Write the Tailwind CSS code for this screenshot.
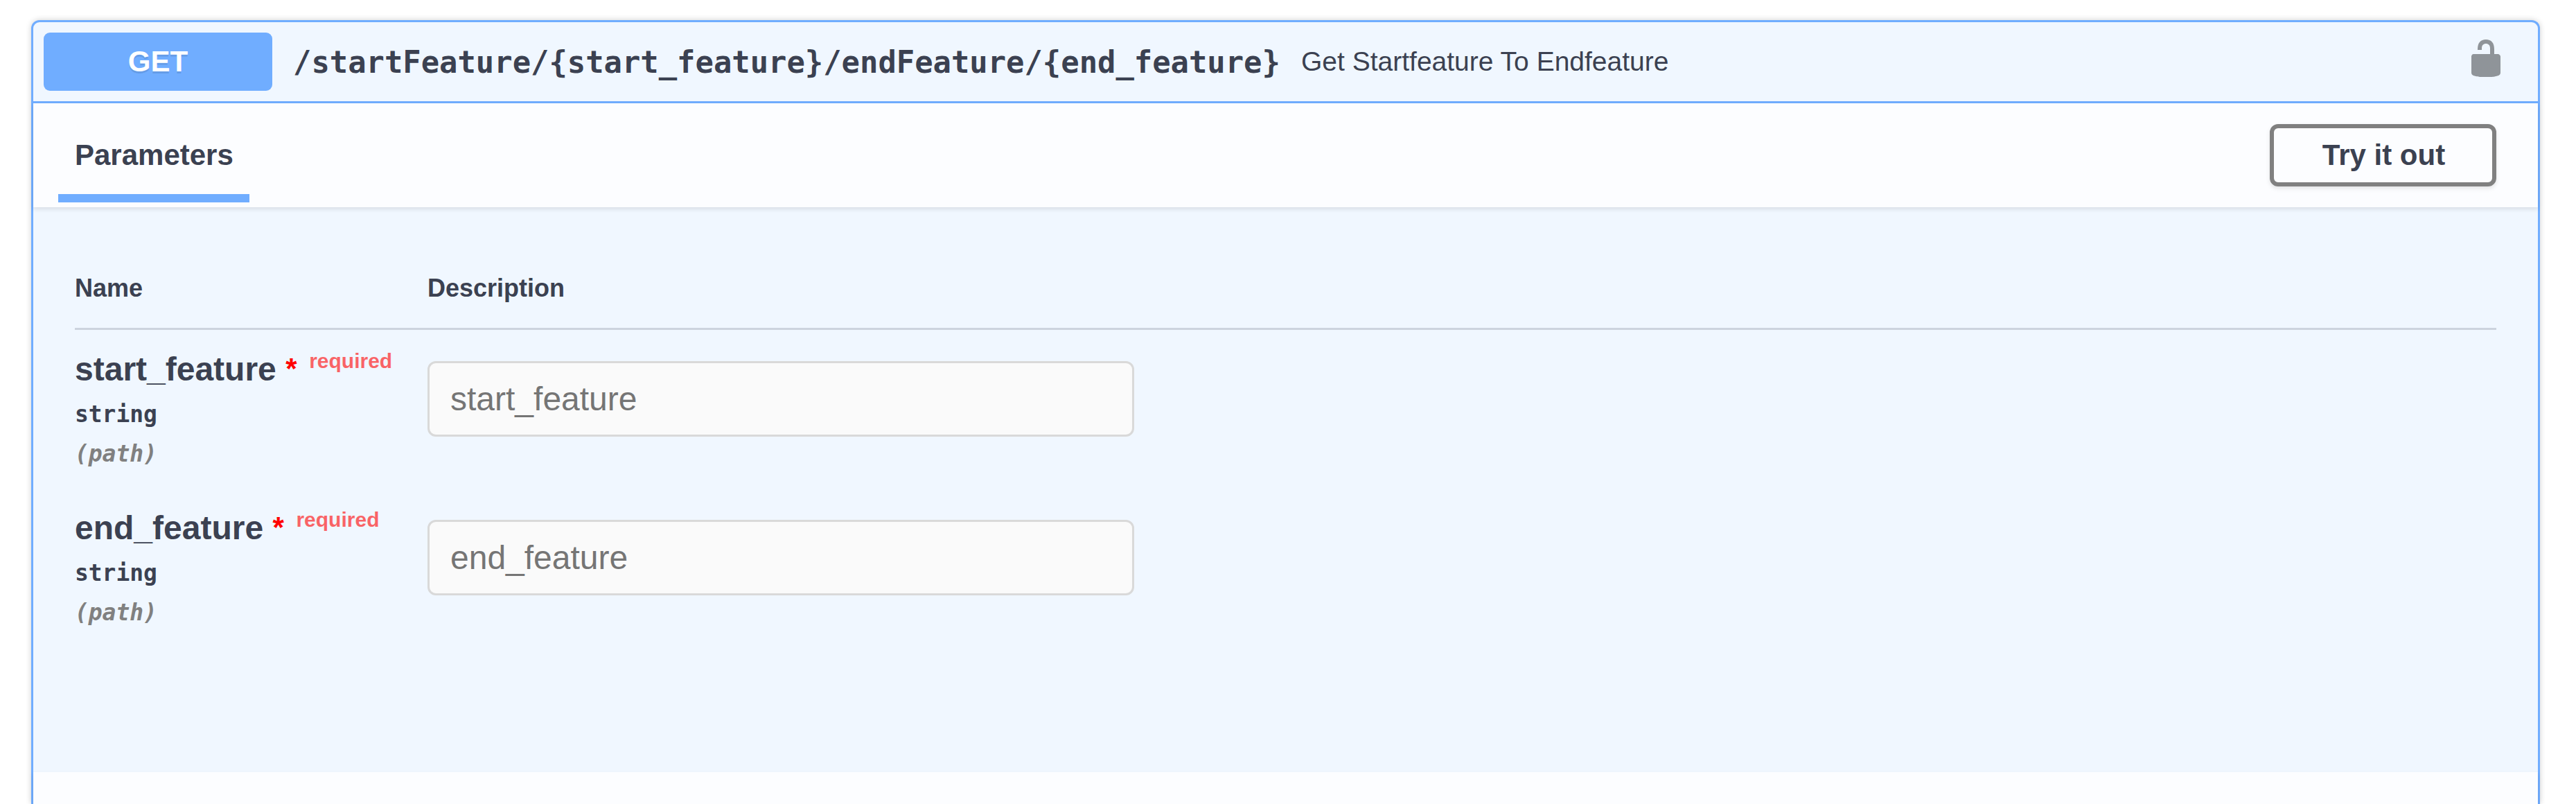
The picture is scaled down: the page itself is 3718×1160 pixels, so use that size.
<!DOCTYPE html>
<html lang="en">
<head>
<meta charset="utf-8">
<title>API operation</title>
<script src="https://cdn.jsdelivr.net/npm/@tailwindcss/browser@4"></script>
</head>
<body class="h-[1160px] overflow-hidden bg-white pt-[29px] pl-[45px] font-['Liberation_Sans',Arial,sans-serif] text-[#3b4151]">
<section class="h-[1131px] w-[3621px] rounded-t-[12px] border-[3px] border-b-0 border-[#70adff] bg-[#f0f7ff] shadow-[0_0_9px_rgba(0,0,0,0.19)]">
  <header class="flex h-[117px] items-center border-b-[3px] border-[#70adff] pl-[15px] pr-[45px]">
    <span class="flex h-[84px] w-[330px] items-center justify-center rounded-[9px] bg-[#70adff] pb-[2px] text-[42px] font-bold text-white [text-shadow:0_3px_0_rgba(0,0,0,0.1)]">GET</span>
    <span class="ml-[30px] w-[1425px] whitespace-nowrap pt-[1px] font-['DejaVu_Sans_Mono',monospace] text-[43.83px] font-bold">/startFeature/{start_feature}/endFeature/{end_feature}</span>
    <span class="ml-[30px] whitespace-nowrap text-[39px]">Get Startfeature To Endfeature</span>
    <svg class="mb-[10px] ml-auto size-[60px] text-[#8f9499]" viewBox="0 0 20 20" fill="currentColor" aria-hidden="true">
      <path d="M15.8 8H14V5.6C14 2.703 12.665 1 10 1 7.334 1 6 2.703 6 5.6V6h2v-.801C8 3.754 8.797 3 10 3c1.203 0 2 .754 2 2.199V8H4c-.553 0-1 .646-1 1.199V17c0 .549.428 1.139.951 1.307l1.197.387C5.672 18.861 6.55 19 7.1 19h5.8c.549 0 1.428-.139 1.951-.307l1.196-.387c.524-.167.953-.757.953-1.306V9.199C17 8.646 16.352 8 15.8 8z"/>
    </svg>
  </header>

  <div class="flex h-[150px] items-center justify-between bg-[#fcfdff] px-[60px] shadow-[0_3px_6px_rgba(0,0,0,0.1)]">
    <h4 class="relative flex h-full items-center pb-[2px] text-[42px] font-bold">Parameters
      <span class="absolute bottom-[7px] -left-[24px] h-[12px] w-[276px] bg-[#70adff]"></span>
    </h4>
    <button class="h-[90px] w-[327px] rounded-[12px] border-[6px] border-[#808080] pb-[2px] pl-[2px] text-[42px] font-bold shadow-[0_3px_6px_rgba(0,0,0,0.1)]">Try it out</button>
  </div>

  <div class="h-[815px] px-[60px] pt-[96px]">
    <div class="grid h-[81px] grid-cols-[509px_1fr] border-b-[3px] border-[#ccd3de] text-[36px] leading-[42px] font-bold">
      <div>Name</div>
      <div>Description</div>
    </div>
    <div class="grid h-[229px] grid-cols-[509px_1020px]">
      <div class="pt-[28px]">
        <div class="h-[65px] whitespace-nowrap text-[48px] leading-[57px] font-bold">start_feature <span class="inline-block w-[19px] text-[#f00]"><span class="relative -top-[3px] text-[42px] leading-none">*</span></span><span class="relative -top-[18px] pl-[15px] text-[30px] leading-none text-[#f00]/60">required</span></div>
        <div class="font-['DejaVu_Sans_Mono',monospace] text-[32.9px] leading-[57px] font-bold">string</div>
        <div class="font-['DejaVu_Sans_Mono',monospace] text-[32.9px] leading-[57px] font-bold text-[#808080] italic">(path)</div>
      </div>
      <input class="mt-[45px] h-[109px] rounded-[12px] border-[3px] border-[#d9d9d9] bg-[#fafafa] px-[30px] text-[48px] placeholder:text-[#757575]" placeholder="start_feature">
    </div>
    <div class="grid h-[229px] grid-cols-[509px_1020px]">
      <div class="pt-[28px]">
        <div class="h-[65px] whitespace-nowrap text-[48px] leading-[57px] font-bold">end_feature <span class="inline-block w-[19px] text-[#f00]"><span class="relative -top-[3px] text-[42px] leading-none">*</span></span><span class="relative -top-[18px] pl-[15px] text-[30px] leading-none text-[#f00]/60">required</span></div>
        <div class="font-['DejaVu_Sans_Mono',monospace] text-[32.9px] leading-[57px] font-bold">string</div>
        <div class="font-['DejaVu_Sans_Mono',monospace] text-[32.9px] leading-[57px] font-bold text-[#808080] italic">(path)</div>
      </div>
      <input class="mt-[45px] h-[109px] rounded-[12px] border-[3px] border-[#d9d9d9] bg-[#fafafa] px-[30px] text-[48px] placeholder:text-[#757575]" placeholder="end_feature">
    </div>
  </div>

  <div class="h-[46px] bg-[#fcfdff] shadow-[0_3px_6px_rgba(0,0,0,0.1)]"></div>
</section>
</body>
</html>
